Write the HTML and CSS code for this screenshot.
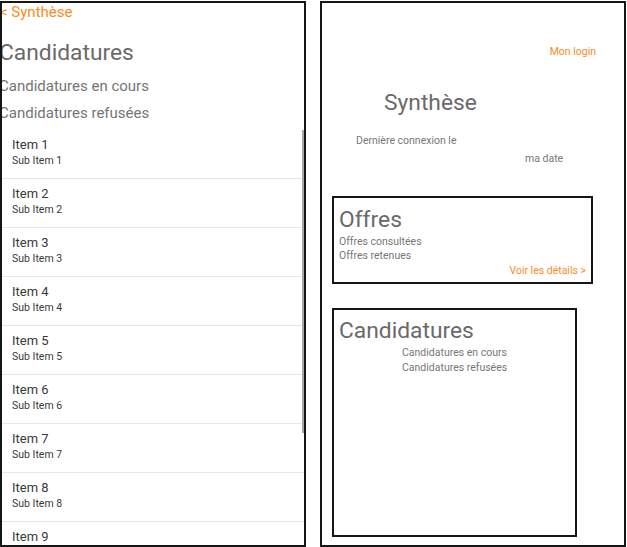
FILE: index.html
```html
<!DOCTYPE html>
<html lang="fr">
<head>
<meta charset="utf-8">
<title>Candidatures</title>
<link rel="stylesheet" href="styles.css">
</head>
<body>
<div class="screens">
  <section class="panel panel-left">
    <div class="back">&lt; Synthèse</div>
    <h1 class="page-title">Candidatures</h1>
    <div class="sub-link first">Candidatures en cours</div>
    <div class="sub-link">Candidatures refusées</div>
    <div class="list-wrap">
      <ul class="list">
        <li class="item"><div class="item-title">Item 1</div><div class="item-sub">Sub Item 1</div></li>
        <li class="item"><div class="item-title">Item 2</div><div class="item-sub">Sub Item 2</div></li>
        <li class="item"><div class="item-title">Item 3</div><div class="item-sub">Sub Item 3</div></li>
        <li class="item"><div class="item-title">Item 4</div><div class="item-sub">Sub Item 4</div></li>
        <li class="item"><div class="item-title">Item 5</div><div class="item-sub">Sub Item 5</div></li>
        <li class="item"><div class="item-title">Item 6</div><div class="item-sub">Sub Item 6</div></li>
        <li class="item"><div class="item-title">Item 7</div><div class="item-sub">Sub Item 7</div></li>
        <li class="item"><div class="item-title">Item 8</div><div class="item-sub">Sub Item 8</div></li>
        <li class="item"><div class="item-title">Item 9</div><div class="item-sub">Sub Item 9</div></li>
      </ul>
      <div class="scroll-thumb"></div>
    </div>
  </section>

  <section class="panel panel-right">
    <div class="login">Mon login</div>
    <h1 class="synth-title">Synthèse</h1>
    <div class="last-conn">Dernière connexion le</div>
    <div class="date">ma date</div>

    <div class="card card-offres">
      <h2 class="card-title">Offres</h2>
      <div class="card-line first">Offres consultées</div>
      <div class="card-line">Offres retenues</div>
      <div class="details">Voir les détails &gt;</div>
    </div>

    <div class="card card-cand">
      <h2 class="card-title">Candidatures</h2>
      <div class="cand-lines">
        <div class="card-line">Candidatures en cours</div>
        <div class="card-line">Candidatures refusées</div>
      </div>
    </div>
  </section>
</div>
</body>
</html>
```

FILE: styles.css
```css
html, body {
  margin: 0;
  padding: 0;
  background: #ffffff;
}

body {
  font-family: Roboto, "Liberation Sans", sans-serif;
  color: #6f6f6f;
}

.screens {
  display: flex;
  gap: 14px;
  padding-top: 1px;
}

.panel {
  box-sizing: border-box;
  height: 546px;
  border: 2px solid #161616;
  background: #fff;
  overflow: hidden;
  position: relative;
}

.panel-left {
  width: 306px;
}

.panel-right {
  width: 306px;
  display: flex;
  flex-direction: column;
}

/* Left screen */
.back {
  margin-left: -2px;
  font-size: 15px;
  line-height: 20px;
  margin-top: -1px;
  color: #fb8b1c;
}

.page-title {
  margin: 16px 0 0 -3px;
  font-size: 22.8px;
  font-weight: 400;
  line-height: 30px;
  color: #6a6a6a;
}

.sub-link {
  margin-left: -3px;
  font-size: 15px;
  line-height: 27px;
  color: #757575;
}

.sub-link.first {
  margin-top: 5px;
}

.list-wrap {
  position: relative;
  margin-top: 3px;
}

.list {
  list-style: none;
  margin: 0;
  padding: 0;
}

.item {
  box-sizing: border-box;
  height: 49px;
  padding: 7px 0 0 10px;
  border-bottom: 1px solid #e6e6e6;
}

.item-title {
  font-size: 13px;
  line-height: 16px;
  color: #3a3a3a;
}

.item-sub {
  font-size: 10.5px;
  line-height: 15px;
  color: #3a3a3a;
}

.scroll-thumb {
  position: absolute;
  top: 0;
  right: 0;
  width: 2px;
  height: 303px;
  background: #a8a8a8;
}

/* Right screen */
.login {
  align-self: flex-end;
  margin: 41px 28px 0 0;
  font-size: 10.5px;
  line-height: 16px;
  color: #fb8b1c;
}

.synth-title {
  margin: 29px 0 0 62px;
  font-size: 22.8px;
  font-weight: 400;
  line-height: 28px;
  color: #6a6a6a;
}

.last-conn {
  margin: 16px 0 0 34px;
  font-size: 10.5px;
  line-height: 16px;
  color: #777;
}

.date {
  margin: 2px 0 0 203px;
  font-size: 10.5px;
  line-height: 16px;
  color: #777;
}

.card {
  box-sizing: border-box;
  margin-left: 10px;
  border: 2px solid #161616;
  padding: 0 5px;
}

.card-offres {
  margin-top: 29px;
  width: 261px;
  height: 88px;
  padding-top: 8px;
}

.card-cand {
  margin-top: 24px;
  width: 245px;
  height: 229px;
  padding-top: 7px;
}

.card-title {
  margin: 0;
  font-size: 22.8px;
  font-weight: 400;
  line-height: 28px;
  color: #6a6a6a;
}

.card-line {
  font-size: 10.5px;
  line-height: 14px;
  color: #777;
}

.card-line.first {
  margin-top: 1px;
}

.details {
  margin-top: 1px;
  text-align: right;
  font-size: 10.5px;
  line-height: 14px;
  color: #fb8b1c;
}

.cand-lines {
  margin: 0 0 0 63px;
}

.cand-lines .card-line {
  line-height: 15px;
}
```
